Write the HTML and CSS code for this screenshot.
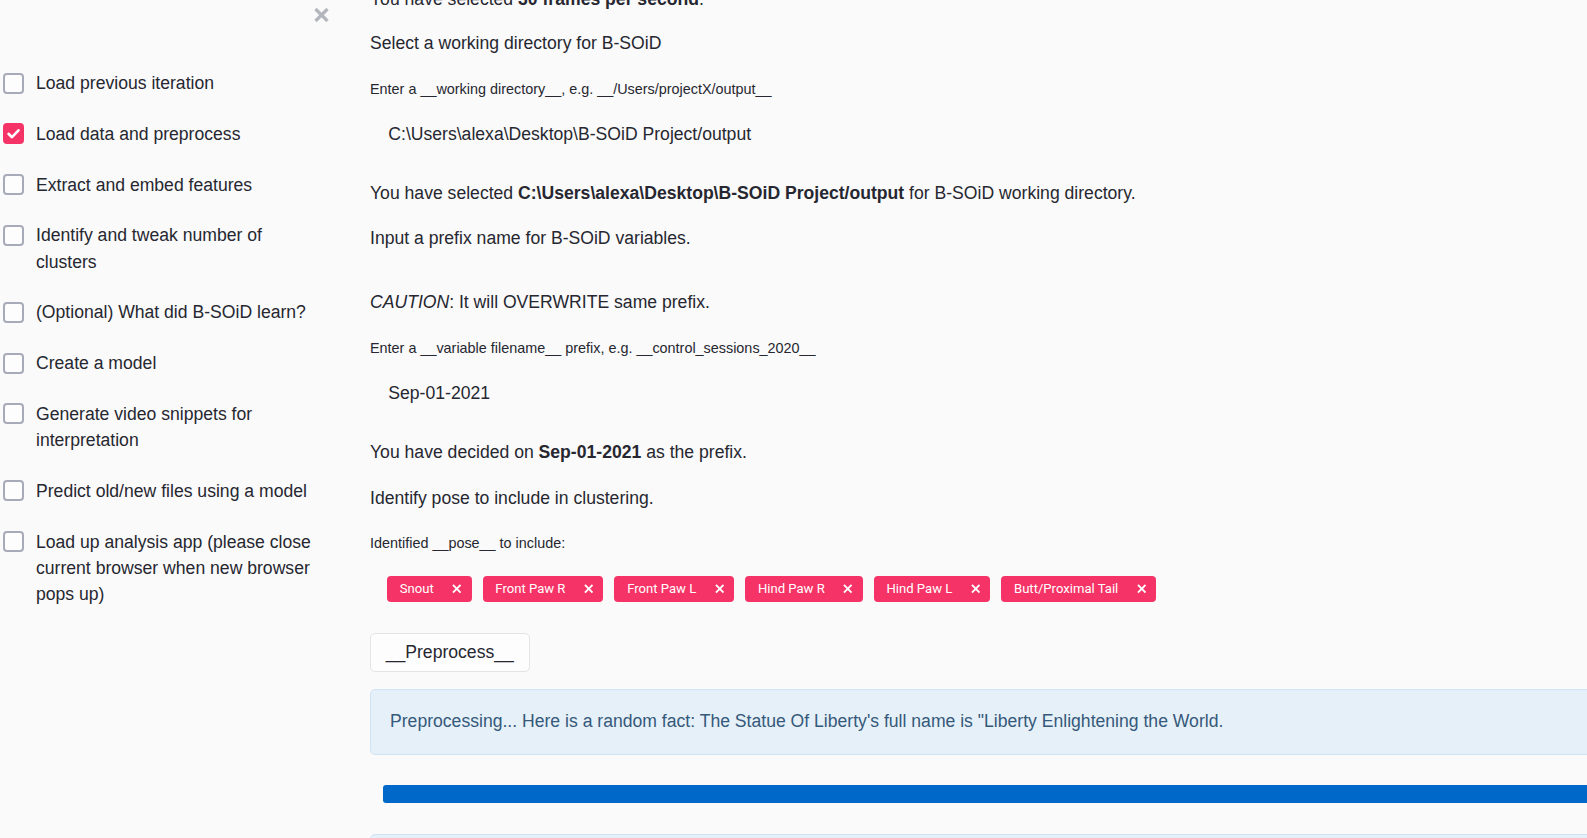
FILE: index.html
```html
<!DOCTYPE html>
<html>
<head>
<meta charset="utf-8">
<link rel="stylesheet" href="styles.css">
</head>
<body>
<div class="app">
  <aside class="sidebar">
    <div class="close-row">
      <svg class="close" width="17" height="16" viewBox="0 0 17 16"><path d="M2.5 2 L14.5 14 M14.5 2 L2.5 14" stroke="#b4b6bd" stroke-width="3.2" stroke-linecap="butt"/></svg>
    </div>
    <ul class="nav">
      <li class="item"><span class="box"></span><span class="txt">Load previous iteration</span></li>
      <li class="item"><span class="box checked"><svg width="21" height="21" viewBox="0 0 21 21"><path d="M5.5 10.8 L9 14.2 L15.5 7.3" fill="none" stroke="#fff" stroke-width="2.6" stroke-linecap="round" stroke-linejoin="round"/></svg></span><span class="txt">Load data and preprocess</span></li>
      <li class="item"><span class="box"></span><span class="txt">Extract and embed features</span></li>
      <li class="item"><span class="box"></span><span class="txt">Identify and tweak number of clusters</span></li>
      <li class="item"><span class="box"></span><span class="txt">(Optional) What did B-SOiD learn?</span></li>
      <li class="item"><span class="box"></span><span class="txt">Create a model</span></li>
      <li class="item"><span class="box"></span><span class="txt">Generate video snippets for interpretation</span></li>
      <li class="item"><span class="box"></span><span class="txt">Predict old/new files using a model</span></li>
      <li class="item"><span class="box"></span><span class="txt">Load up analysis app (please close current browser when new browser pops up)</span></li>
    </ul>
  </aside>
  <main class="main">
    <p class="p first">You have selected <b>30 frames per second</b>.</p>
    <p class="p m16">Select a working directory for B-SOiD</p>
    <div class="label m21">Enter a __working directory__, e.g. __/Users/projectX/output__</div>
    <div class="input">C:\Users\alexa\Desktop\B-SOiD Project/output</div>
    <p class="p m16">You have selected <b>C:\Users\alexa\Desktop\B-SOiD Project/output</b> for B-SOiD working directory.</p>
    <p class="p m17">Input a prefix name for B-SOiD variables.</p>
    <p class="p m36"><i>CAUTION</i>: It will OVERWRITE same prefix.</p>
    <div class="label m20">Enter a __variable filename__ prefix, e.g. __control_sessions_2020__</div>
    <div class="input">Sep-01-2021</div>
    <p class="p m16">You have decided on <b>Sep-01-2021</b> as the prefix.</p>
    <p class="p m18">Identify pose to include in clustering.</p>
    <div class="label m20">Identified __pose__ to include:</div>
    <div class="tags">
      <span class="tag">Snout<svg class="x" viewBox="0 0 10 10"><path d="M1 1 L9 9 M9 1 L1 9"/></svg></span>
      <span class="tag">Front Paw R<svg class="x" viewBox="0 0 10 10"><path d="M1 1 L9 9 M9 1 L1 9"/></svg></span>
      <span class="tag">Front Paw L<svg class="x" viewBox="0 0 10 10"><path d="M1 1 L9 9 M9 1 L1 9"/></svg></span>
      <span class="tag">Hind Paw R<svg class="x" viewBox="0 0 10 10"><path d="M1 1 L9 9 M9 1 L1 9"/></svg></span>
      <span class="tag">Hind Paw L<svg class="x" viewBox="0 0 10 10"><path d="M1 1 L9 9 M9 1 L1 9"/></svg></span>
      <span class="tag">Butt/Proximal Tail<svg class="x" viewBox="0 0 10 10"><path d="M1 1 L9 9 M9 1 L1 9"/></svg></span>
    </div>
    <div class="btn-row"><button class="btn">__Preprocess__</button></div>
    <div class="info">Preprocessing... Here is a random fact: The Statue Of Liberty's full name is "Liberty Enlightening the World.</div>
    <div class="progress"><div class="bar"></div></div>
    <div class="info next"></div>
  </main>
</div>
</body>
</html>
```
FILE: styles.css
```css
html, body {
  margin: 0;
  padding: 0;
  background: #fafafa;
  overflow: hidden;
  width: 1587px;
  height: 838px;
}
body {
  font-family: "Liberation Sans", Arial, sans-serif;
  color: #262730;
}
.app {
  display: flex;
  align-items: flex-start;
}
.sidebar {
  flex: none;
  width: 340px;
  box-sizing: border-box;
  padding: 0 14px 0 3px;
}
.close-row {
  height: 70px;
  position: relative;
}
.close {
  position: absolute;
  left: 310px;
  top: 7px;
}
.nav {
  list-style: none;
  margin: 0;
  padding: 0;
  display: flex;
  flex-direction: column;
  gap: 24.6px;
}
.item {
  display: flex;
  align-items: flex-start;
  gap: 12px;
  font-size: 17.6px;
  line-height: 26.2px;
}
.box {
  flex: none;
  width: 21px;
  height: 21px;
  box-sizing: border-box;
  border: 2px solid #a7abb9;
  border-radius: 4px;
  margin-top: 2.5px;
  background: #fdfdfd;
  position: relative;
}
.box.checked {
  background: #f63366;
  border-color: #f63366;
}
.box.checked svg {
  position: absolute;
  left: -2px;
  top: -2px;
}
.txt {
  flex: 1;
}
.main {
  flex: none;
  width: 1400px;
  margin-left: 30px;
  display: flex;
  flex-direction: column;
  align-items: flex-start;
}
.p {
  margin: 0;
  font-size: 17.6px;
  line-height: 28px;
}
.p.first { margin-top: -15px; }
.m16 { margin-top: 16px; }
.m17 { margin-top: 17.3px; }
.m18 { margin-top: 18px; }
.m36 { margin-top: 36px; }
.m20 { margin-top: 20.5px; }
.m21 { margin-top: 21px; }
.label {
  font-size: 14.4px;
  line-height: 23px;
}
.input {
  margin-top: 4px;
  padding: 15px 18.3px;
  font-size: 17.6px;
  line-height: 28px;
}
.tags {
  margin-top: 20.7px;
  padding-left: 17px;
  display: flex;
  gap: 11px;
}
.tag {
  display: inline-flex;
  align-items: center;
  height: 25.7px;
  box-sizing: border-box;
  padding: 0 10px 0 12.7px;
  background: #f63366;
  color: #fff;
  border-radius: 4px;
  font-family: Roboto, "Liberation Sans", sans-serif;
  font-size: 13.1px;
}
.tag .x {
  width: 9.5px;
  height: 9.5px;
  margin-left: 18.5px;
  stroke: #fff;
  stroke-width: 2;
  fill: none;
}
.btn-row {
  margin-top: 31.6px;
}
.btn {
  height: 38.4px;
  padding: 0 14.7px;
  font-family: "Liberation Sans", Arial, sans-serif;
  font-size: 17.6px;
  color: #262730;
  background: #fdfdfd;
  border: 1px solid #e3e4e8;
  border-radius: 5px;
}
.info {
  margin-top: 17.6px;
  align-self: stretch;
  height: 65.4px;
  box-sizing: border-box;
  display: flex;
  align-items: center;
  padding: 0 19px;
  background: #e6f0f9;
  border: 1px solid #d0e3f4;
  border-radius: 5px;
  color: #35597a;
  font-size: 17.6px;
}
.progress {
  margin-top: 30.3px;
  margin-left: 13px;
  align-self: stretch;
  height: 17.7px;
}
.bar {
  height: 100%;
  background: #0068c9;
  border-radius: 3px;
}
.info.next {
  margin-top: 31.3px;
}
```
